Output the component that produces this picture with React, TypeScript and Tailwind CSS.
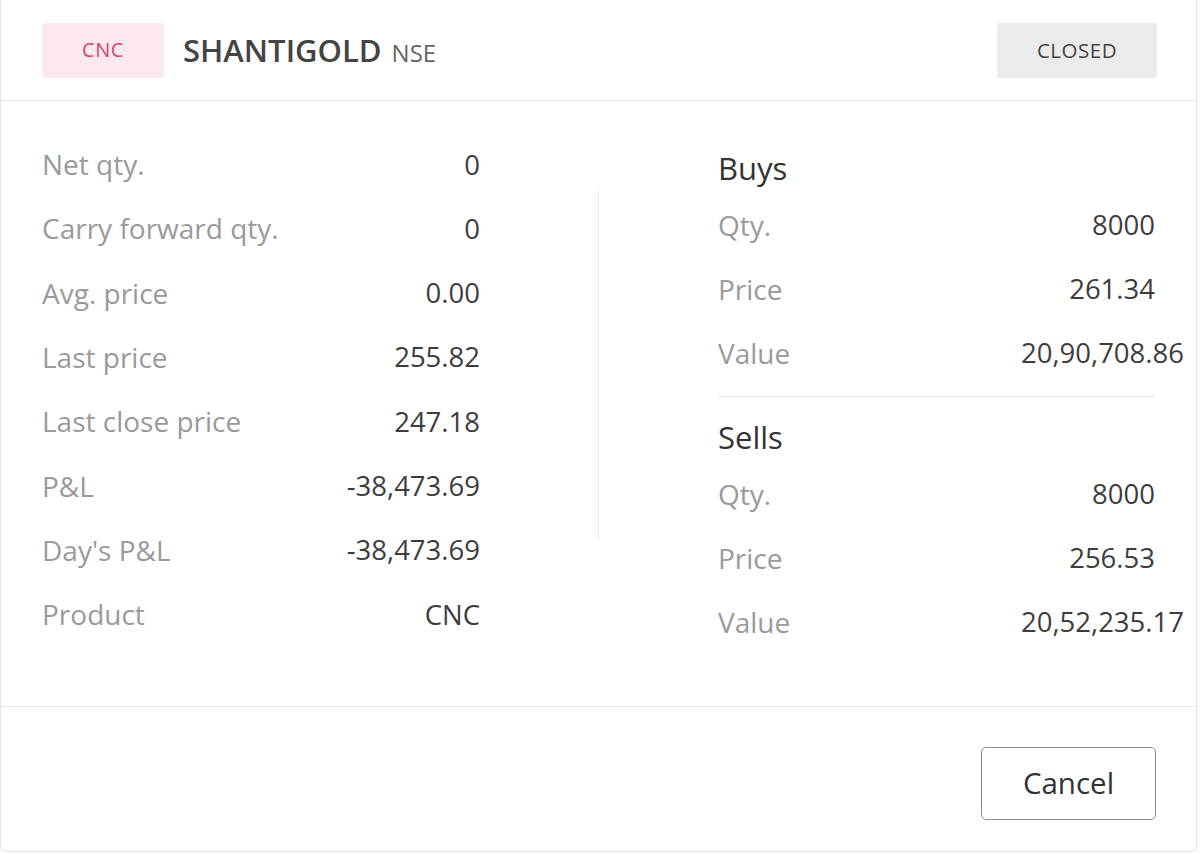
const font = { fontFamily: '"Open Sans", "Noto Sans", sans-serif' };

const leftRows: [string, string][] = [
  ["Net qty.", "0"],
  ["Carry forward qty.", "0"],
  ["Avg. price", "0.00"],
  ["Last price", "255.82"],
  ["Last close price", "247.18"],
  ["P&L", "-38,473.69"],
  ["Day's P&L", "-38,473.69"],
  ["Product", "CNC"],
];

const buys: [string, string][] = [
  ["Qty.", "8000"],
  ["Price", "261.34"],
  ["Value", "20,90,708.86"],
];

const sells: [string, string][] = [
  ["Qty.", "8000"],
  ["Price", "256.53"],
  ["Value", "20,52,235.17"],
];

function Row({ label, value }: { label: string; value: string }) {
  return (
    <div className="flex h-[64.3px] items-center justify-between">
      <span className="text-[28px] text-[#9a9a9a]">{label}</span>
      <span className="text-[27.5px] text-[#3d3d3d]">{value}</span>
    </div>
  );
}

function SideRow({ label, value }: { label: string; value: string }) {
  return (
    <div className="flex h-[64px] items-center">
      <span className="flex-1 text-[28px] text-[#9a9a9a]">{label}</span>
      <span className="w-[134px] whitespace-nowrap text-right text-[27.5px] text-[#3d3d3d]">{value}</span>
    </div>
  );
}

export default function App() {
  return (
    <div className="h-[854px] w-[1200px] bg-white" style={font}>
      <div className="flex h-[852px] w-[1197px] flex-col rounded-b-md border border-t-0 border-[#e4e4e4] bg-white">
        <header className="flex h-[101px] items-center border-b border-[#e8e8e8] px-[41px]">
          <div className="flex h-[55px] w-[122px] items-center justify-center rounded-[3px] bg-[#fce9f0] text-[20px] tracking-wide text-[#cf4670]">
            CNC
          </div>
          <div className="ml-[19px] flex items-baseline">
            <span className="text-[31px] font-semibold text-[#444]">SHANTIGOLD</span>
            <span className="ml-[10px] text-[24px] text-[#666]">NSE</span>
          </div>
          <div className="ml-auto mr-[-2px] flex h-[55px] w-[160px] items-center justify-center rounded-[3px] bg-[#ebebeb] text-[20.5px] tracking-wide text-[#444]">
            CLOSED
          </div>
        </header>

        <div className="flex flex-1 px-[41px] pt-[31px]">
          <div className="w-[439px]">
            {leftRows.map(([l, v]) => (
              <Row key={l} label={l} value={v} />
            ))}
          </div>
          <div className="ml-[118px] mt-[58px] h-[350px] w-px bg-[#ebebeb]" />
          <div className="ml-[119px] w-[438px]">
            <div className="mt-[11px] flex h-[50px] items-center text-[31px] text-[#333]">Buys</div>
            {buys.map(([l, v]) => (
              <SideRow key={l} label={l} value={v} />
            ))}
            <div className="mt-[11px] border-t border-[#e6e6e6]" />
            <div className="mt-[15px] flex h-[50px] items-center text-[31px] text-[#333]">Sells</div>
            {sells.map(([l, v]) => (
              <SideRow key={l} label={l} value={v} />
            ))}
          </div>
        </div>

        <footer className="flex justify-end border-t border-[#e8e8e8] px-[40px] pb-[31px] pt-[40px]">
          <button className="h-[73px] w-[175px] rounded-[5px] border border-[#8e8e8e] text-[29.5px] text-[#333]">
            Cancel
          </button>
        </footer>
      </div>
    </div>
  );
}
